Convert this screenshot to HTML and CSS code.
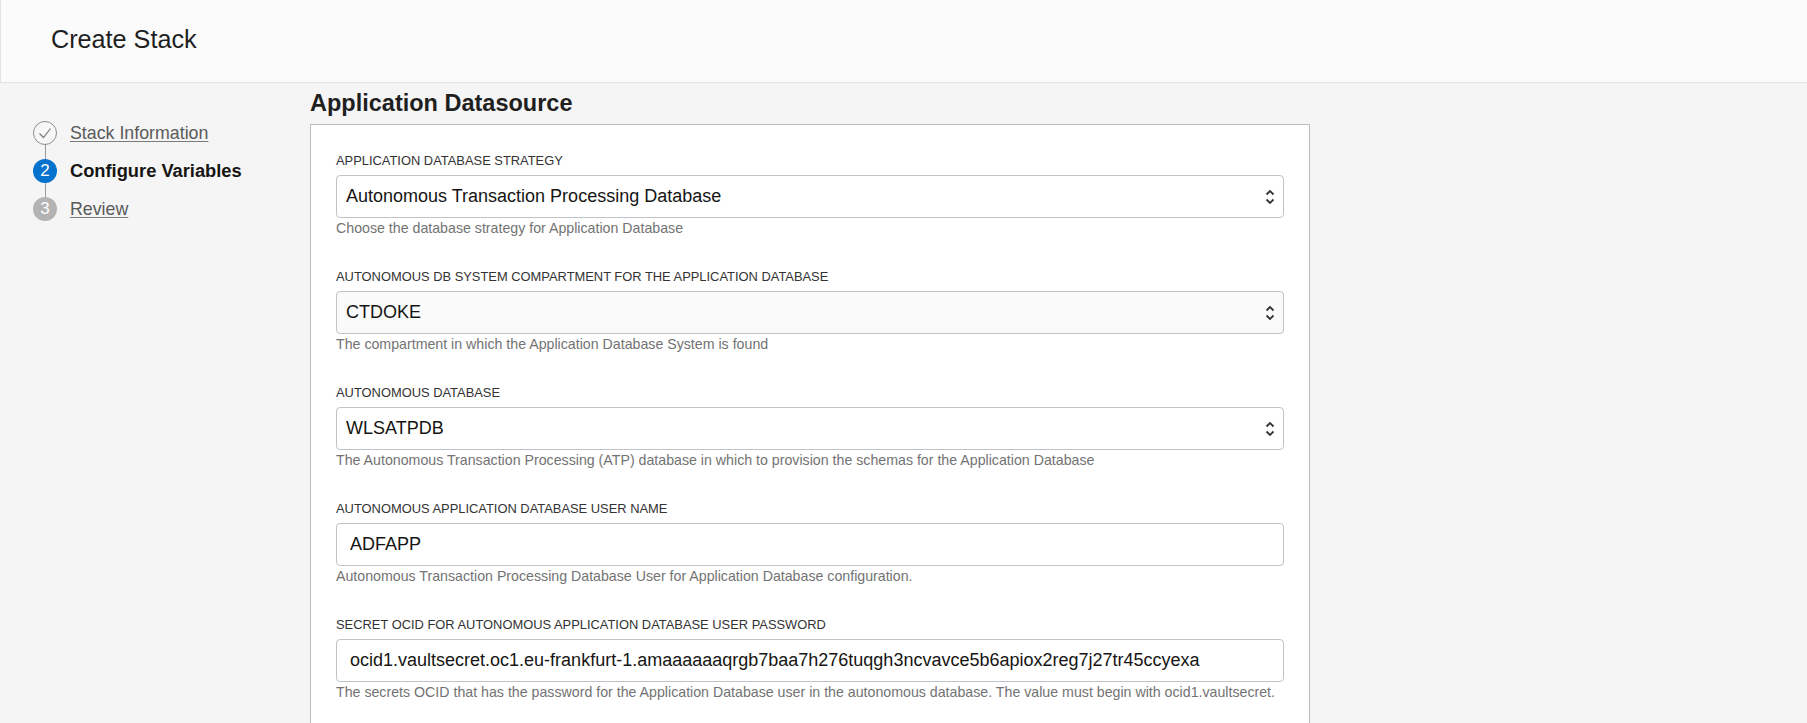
FILE: index.html
```html
<!DOCTYPE html>
<html lang="en">
<head>
<meta charset="utf-8">
<title>Create Stack</title>
<link rel="stylesheet" href="styles.css">
</head>
<body>
<header class="page-header">
  <h1 class="page-title">Create Stack</h1>
</header>
<div class="layout">
  <nav class="steps">
    <div class="step step-done">
      <div class="marker">
        <span class="line line-top hidden"></span>
        <span class="dot dot-done">
          <svg width="22" height="22" viewBox="0 0 22 22"><path d="M5.5 11.5 L9.5 15.5 L16.5 6.5" fill="none" stroke="#7a7a7a" stroke-width="1.2"/></svg>
        </span>
        <span class="line line-bottom"></span>
      </div>
      <a class="step-label link" href="#">Stack Information</a>
    </div>
    <div class="step step-current">
      <div class="marker">
        <span class="line line-top"></span>
        <span class="dot dot-current">2</span>
        <span class="line line-bottom"></span>
      </div>
      <span class="step-label current">Configure Variables</span>
    </div>
    <div class="step step-todo">
      <div class="marker">
        <span class="line line-top"></span>
        <span class="dot dot-todo">3</span>
        <span class="line line-bottom hidden"></span>
      </div>
      <a class="step-label link" href="#">Review</a>
    </div>
  </nav>
  <main class="main">
    <h2 class="section-title">Application Datasource</h2>
    <section class="panel">
      <div class="field">
        <div class="field-label">APPLICATION DATABASE STRATEGY</div>
        <div class="control select">
          <span class="control-text">Autonomous Transaction Processing Database</span>
          <svg class="chev" width="10" height="16" viewBox="0 0 10 16"><polyline points="1.5,5.5 5,2 8.5,5.5" fill="none" stroke="#333" stroke-width="1.8"/><polyline points="1.5,10.5 5,14 8.5,10.5" fill="none" stroke="#333" stroke-width="1.8"/></svg>
        </div>
        <div class="help">Choose the database strategy for Application Database</div>
      </div>
      <div class="field">
        <div class="field-label">AUTONOMOUS DB SYSTEM COMPARTMENT FOR THE APPLICATION DATABASE</div>
        <div class="control select select-muted">
          <span class="control-text">CTDOKE</span>
          <svg class="chev" width="10" height="16" viewBox="0 0 10 16"><polyline points="1.5,5.5 5,2 8.5,5.5" fill="none" stroke="#333" stroke-width="1.8"/><polyline points="1.5,10.5 5,14 8.5,10.5" fill="none" stroke="#333" stroke-width="1.8"/></svg>
        </div>
        <div class="help">The compartment in which the Application Database System is found</div>
      </div>
      <div class="field">
        <div class="field-label">AUTONOMOUS DATABASE</div>
        <div class="control select">
          <span class="control-text">WLSATPDB</span>
          <svg class="chev" width="10" height="16" viewBox="0 0 10 16"><polyline points="1.5,5.5 5,2 8.5,5.5" fill="none" stroke="#333" stroke-width="1.8"/><polyline points="1.5,10.5 5,14 8.5,10.5" fill="none" stroke="#333" stroke-width="1.8"/></svg>
        </div>
        <div class="help">The Autonomous Transaction Processing (ATP) database in which to provision the schemas for the Application Database</div>
      </div>
      <div class="field">
        <div class="field-label">AUTONOMOUS APPLICATION DATABASE USER NAME</div>
        <div class="control text-input">
          <span class="control-text">ADFAPP</span>
        </div>
        <div class="help">Autonomous Transaction Processing Database User for Application Database configuration.</div>
      </div>
      <div class="field">
        <div class="field-label">SECRET OCID FOR AUTONOMOUS APPLICATION DATABASE USER PASSWORD</div>
        <div class="control text-input">
          <span class="control-text">ocid1.vaultsecret.oc1.eu-frankfurt-1.amaaaaaaqrgb7baa7h276tuqgh3ncvavce5b6apiox2reg7j27tr45ccyexa</span>
        </div>
        <div class="help">The secrets OCID that has the password for the Application Database user in the autonomous database. The value must begin with ocid1.vaultsecret.</div>
      </div>
    </section>
  </main>
</div>
</body>
</html>
```

FILE: styles.css
```css
* { box-sizing: border-box; }

html, body {
  margin: 0;
  padding: 0;
}

body {
  background: #f5f5f5;
  font-family: "Liberation Sans", Arial, sans-serif;
  color: #161513;
  overflow: hidden;
}

.page-header {
  height: 83px;
  background: #fbfbfb;
  border-left: 1px solid #e2e2e2;
  border-bottom: 1px solid #e2e2e2;
  display: flex;
  align-items: center;
  padding-left: 50px;
  padding-bottom: 4px;
}

.page-title {
  margin: 0;
  font-size: 25.2px;
  font-weight: normal;
  color: #1f1f1f;
  line-height: 30px;
}

.layout {
  display: flex;
}

.steps {
  width: 310px;
  flex: none;
  padding-top: 31px;
  padding-left: 33px;
  display: flex;
  flex-direction: column;
}

.step {
  display: flex;
  align-items: center;
  height: 38px;
}

.marker {
  width: 24px;
  height: 38px;
  display: flex;
  flex-direction: column;
  align-items: center;
  margin-right: 13px;
}

.line {
  width: 1px;
  height: 7px;
  background: #9a9a9a;
}

.line.hidden {
  background: transparent;
}

.dot {
  width: 24px;
  height: 24px;
  border-radius: 50%;
  display: flex;
  align-items: center;
  justify-content: center;
  font-size: 17px;
  color: #fff;
  flex: none;
}

.dot-done {
  border: 1px solid #8c8c8c;
  background: #f7f7f7;
}

.dot-current {
  background: #0572ce;
}

.dot-todo {
  background: #b3b3b3;
}

.step-label {
  font-size: 17.8px;
  line-height: 22px;
}

.step-label.link {
  color: #5a5a5a;
  text-decoration: underline;
  text-decoration-color: #7a7a7a;
  text-underline-offset: 2px;
}

.step-label.current {
  font-size: 18.3px;
  font-weight: bold;
  color: #161513;
}

.main {
  flex: none;
  width: 1000px;
  padding-top: 6px;
}

.section-title {
  margin: 0 0 7px 0;
  font-size: 23.5px;
  line-height: 28px;
  font-weight: bold;
  color: #1f1f1f;
}

.panel {
  background: #fff;
  border: 1px solid #b9bdc4;
  padding: 26px 25px 40px 25px;
  min-height: 700px;
}

.field {
  margin-bottom: 30px;
}

.field-label {
  font-size: 12.9px;
  line-height: 16px;
  padding-top: 2px;
  color: #333;
  margin-bottom: 6px;
  white-space: nowrap;
}

.control {
  height: 43px;
  border: 1px solid #bfc2c7;
  border-radius: 4px;
  background: #fff;
  display: flex;
  align-items: center;
}

.select {
  padding-left: 9px;
  padding-right: 8px;
}

.select-muted {
  background: #fafafa;
}

.text-input {
  padding-left: 13px;
  padding-right: 13px;
}

.control-text {
  flex: 1;
  font-size: 18px;
  color: #161513;
  white-space: nowrap;
  overflow: hidden;
}

.chev {
  flex: none;
}

.help {
  margin-top: 1px;
  font-size: 14.2px;
  line-height: 18px;
  color: #737373;
  white-space: nowrap;
}
```
